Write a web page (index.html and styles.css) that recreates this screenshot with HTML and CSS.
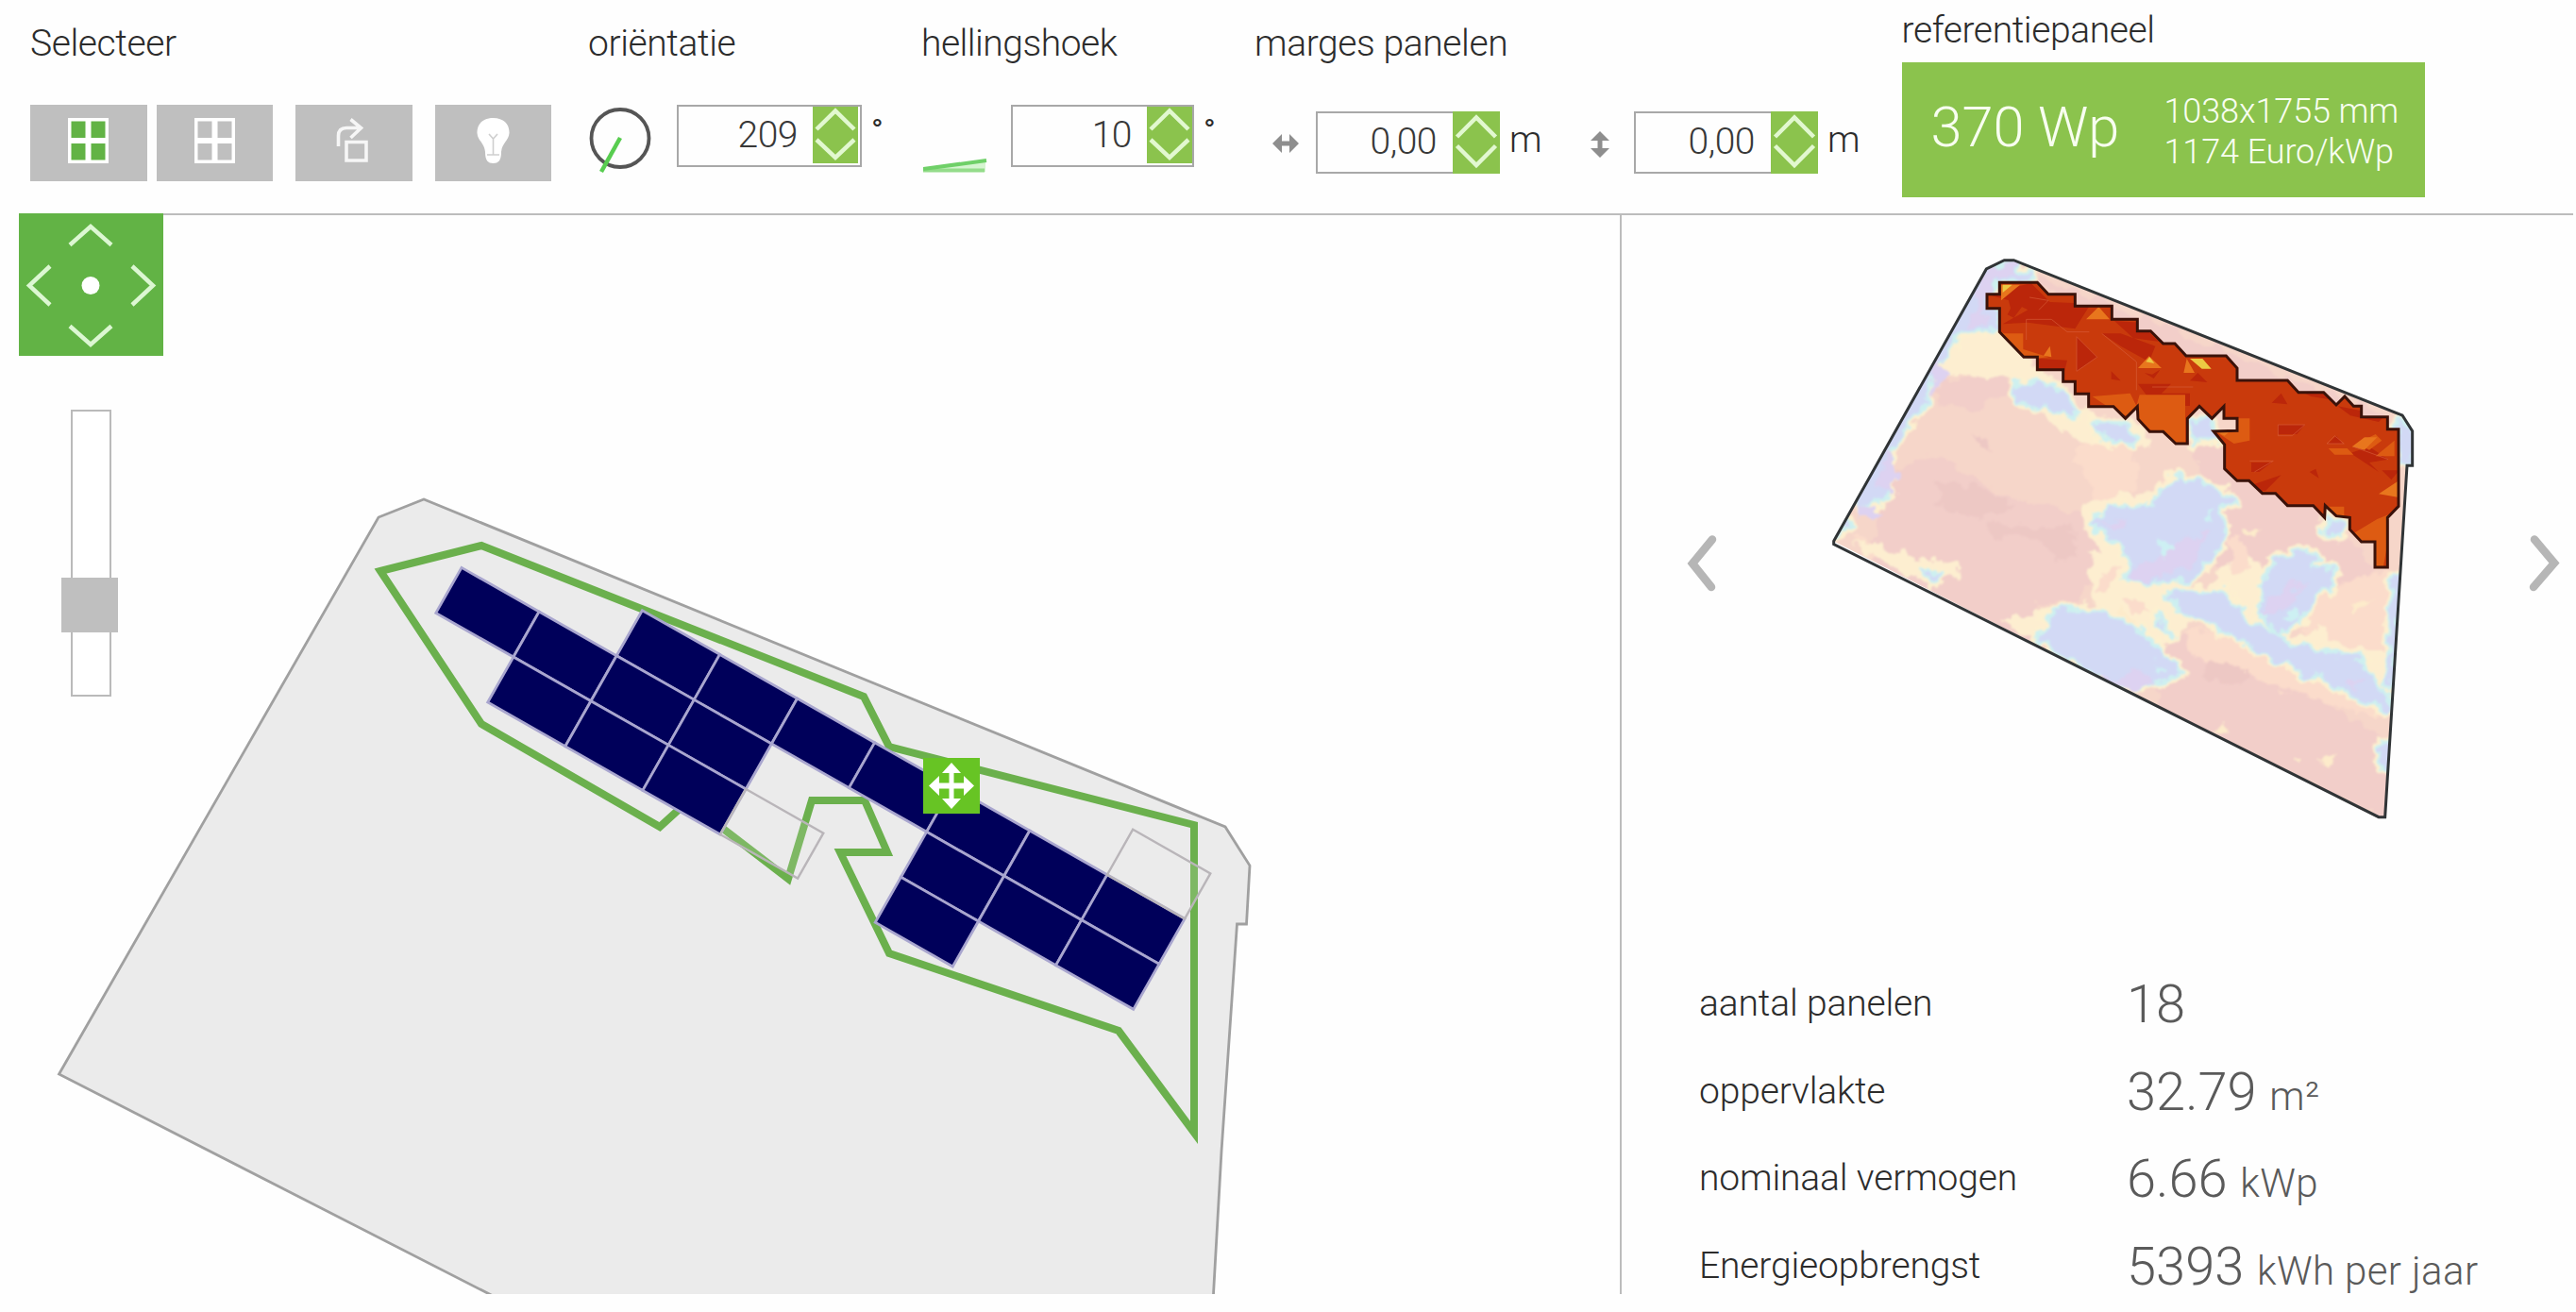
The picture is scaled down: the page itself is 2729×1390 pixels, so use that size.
FILE: index.html
```html
<!DOCTYPE html>
<html lang="nl">
<head>
<meta charset="utf-8">
<title>Zonnepanelen</title>
<link rel="stylesheet" href="styles.css">
</head>
<body>
<header class="toolbar">
  <section class="group">
    <h2 class="label">Selecteer</h2>
    <div class="buttons">
      <button class="tool"><svg width="43" height="48" viewBox="0 0 43 48"><path fill="#fff" d="M0 0h43v48H0z"/><path fill="#62b345" d="M3.500 3.500h15v17.500h-15zM24.500 3.500h15v17.500h-15zM3.500 27h15v17.500h-15zM24.500 27h15v17.500h-15z"/></svg></button>
      <button class="tool tool-gap"><svg width="43" height="48" viewBox="0 0 43 48"><path fill="#fff" d="M0 0h43v48H0z"/><path fill="#bfbfbf" d="M3.500 3.500h15v17.500h-15zM24.500 3.500h15v17.500h-15zM3.500 27h15v17.500h-15zM24.500 27h15v17.500h-15z"/></svg></button>
      <button class="tool tool-gap"><svg width="43" height="48" viewBox="0 0 43 48" fill="none" stroke="#f6f6f6" stroke-width="3.600"><path d="M5.500 30V19q0-8.500 8.500-8.500h15M18.500 1.500l11 9-11 10.500M14 25.500h21V45H14z"/></svg></button>
      <button class="tool"><svg width="43" height="48" viewBox="0 0 43 48"><path fill="#fff" d="M21.500 0C10 0 4 7 4.500 16c.5 8 7.500 10 8.500 20 0 9 3 12 8.500 12s8.500-3 8.500-12c1-10 8-12 8.500-20 .5-9-5.500-16-17-16z"/><path fill="none" stroke="#cfcfcf" stroke-width="1.600" d="M17 17l4.500 5 4.500-5M21.500 22v17M15 39h13"/></svg></button>
    </div>
  </section>
  <section class="group">
    <h2 class="label">oriëntatie</h2>
    <div class="controls">
      <svg class="dial" width="70" height="76" viewBox="0 0 70 76"><circle cx="34" cy="35.500" r="30.500" fill="none" stroke="#555" stroke-width="3.800"/><path d="M34 35L14 71" stroke="#58cd50" stroke-width="4.500"/></svg>
      <div class="spinner spin-ori"><span class="value">209</span><span class="steps"><svg width="48" height="60" viewBox="0 0 48 60"><path d="M4 24L24 4.500 44 24M4 35l20 19L44 35"/></svg></span></div>
      <span class="degree">°</span>
    </div>
  </section>
  <section class="group">
    <h2 class="label label-slope">hellingshoek</h2>
    <div class="controls">
      <svg class="slope" width="70" height="76" viewBox="0 0 70 76"><path d="M0 69L66 58V71H0z" fill="#d5f5d0"/><path d="M0 69.500h65" stroke="#94dc8a" stroke-width="4"/><path d="M0 68L67 59" stroke="#6fd068" stroke-width="4"/></svg>
      <div class="spinner spin-hel"><span class="value">10</span><span class="steps"><svg width="48" height="60" viewBox="0 0 48 60"><path d="M4 24L24 4.500 44 24M4 35l20 19L44 35"/></svg></span></div>
      <span class="degree">°</span>
    </div>
  </section>
  <section class="group">
    <h2 class="label">marges panelen</h2>
    <div class="controls margins">
      <svg class="arrow-h" width="28" height="20" viewBox="0 0 28 20"><path fill="#8e8e8e" d="M0 10L10 0v7.500h8V0l10 10-10 10v-7.500h-8V20z"/></svg>
      <div class="spinner full"><span class="value">0,00</span><span class="steps"><svg width="50" height="66" viewBox="0 0 50 66"><path d="M4.500 27L25 6.500 45.500 27M4.500 36.500L25 57 45.500 36.500"/></svg></span></div>
      <span class="unit">m</span>
      <svg class="arrow-v" width="20" height="28" viewBox="0 0 20 28"><path fill="#8e8e8e" d="M10 0L0 10h7.500v8H0l10 10 10-10h-7.500v-8H20z"/></svg>
      <div class="spinner full"><span class="value">0,00</span><span class="steps"><svg width="50" height="66" viewBox="0 0 50 66"><path d="M4.500 27L25 6.500 45.500 27M4.500 36.500L25 57 45.500 36.500"/></svg></span></div>
      <span class="unit">m</span>
    </div>
  </section>
  <section class="group reference">
    <h2 class="label">referentiepaneel</h2>
    <div class="card">
      <span class="power">370 Wp</span>
      <span class="specs">1038x1755 mm<br>1174 Euro/kWp</span>
    </div>
  </section>
</header>
<main class="workspace">
  <section class="canvas">
    <svg class="roof" width="1716" height="1143" viewBox="0 228 1716 1143">
      <defs><path id="p" d="M0 0l82.100 46.660-27.200 48-82.100-46.660z"/></defs>
      <path d="M62.500 1138L401 548l48-19 849 347 26 41-3.500 62h-10L1294 1220l-9 160H536z" fill="#ebebeb" stroke="#a0a0a0" stroke-width="2.800"/>
      <path d="M403 605l107-27 405 160 27 53 323 83v326l-80-108-243-82-52-107h50l-24-55h-56l-25 83-69-53-33-33-34 31-189-109z" fill="none" stroke="#6bb04d" stroke-width="8" stroke-miterlimit="10"/>
      <g id="panels" fill="#00005a" stroke="#a9a6cf" stroke-width="2.800"></g>
      <g fill="#ebebeb" fill-opacity=".15" stroke="#b9b5b9" stroke-width="2.400"><use href="#p" x="790.200" y="836"/><use href="#p" x="1200.200" y="878.700"/></g>
      <path d="M978 803h60v59h-60z" fill="#67c424"/>
      <path d="M1008 808l10 11h-7.500v10.500H1021V822l11 10.500-11 10.500v-7.500h-10.500V846h7.500l-10 11-10-11h7.500v-10.500H995v7.500l-11-10.500 11-10.500v7.500h10.500V819H998z" fill="#fff"/>
    </svg>
    <div class="tools">
      <svg class="pan" width="153" height="151" viewBox="0 0 153 151"><path fill="#62b345" d="M0 0h153v151H0z"/><g fill="none" stroke="#dcf7d2" stroke-width="4.500"><path d="M54 33.500L76 14l22 19.500M54 119.500L76 139l22-19.500M33 56L11 76.500 33 97M120 56l22 20.500L120 97"/></g><circle cx="76" cy="76.500" r="9.500" fill="#fff"/></svg>
      <div class="zoom"><div class="handle"></div></div>
    </div>
  </section>
  <aside class="side">
    <div class="carousel">
      <svg width="36" height="66" viewBox="0 0 36 66"><path class="chev" d="M29 7.500L8 33l20 25"/></svg>
      <svg class="heat" width="640" height="606" viewBox="0 0 1920 1818">
        <defs>
          <clipPath id="roofclip"><path d="M68 940L553 75l57-28h30L1875 540l32 50v110h-17L1820 1822h-20z"/></clipPath>
          <clipPath id="redclip"><path id="redshape" d="M555 200v-45h40v-37h120l35 37h85v38h117v42h81v37h42l40 40h37l36 39h127l35 39v39h160l35 38h80l40 40 27-27 28 31h25v34h83v39h35v245l-35 36v158h-40v-81h-43l-37-39v-38l-43-5-35-33-2 38-36-38h-82l-38-39h-42l-42-40h-38l-40-38v-77l-35-42 75-2v-39h-42v-39l-38 39-40-39-38 39v80h-37l-40-38h-43l-37-40-2-40-38 38-38-38h-79v-40h-43v-39h-38v-38h-82v-40h-43l-77-80v-75z"/></clipPath>
          <filter id="ragged" x="0" y="0" width="1" height="1"><feTurbulence type="fractalNoise" baseFrequency=".022" numOctaves="3" seed="4"/><feDisplacementMap in="SourceGraphic" scale="62" xChannelSelector="R" yChannelSelector="G"/><feGaussianBlur stdDeviation="3.500"/></filter>
          <path id="cool" d="M450 60l60-20 55 50-80 12-35 33 5 35 25 10-5 45-100 15-35 60-15 50-25 30v50l-45 30-20 50-35 60 5 60-25 60-50 20-20-50-80 60 70 40-60 30-80 30zM520 385l70-10 50 25 50 50-25 15-55-25-70-15zM730 485l70 5 40 30-10 15-70-5zM940 625l105 35 50 40-45 10 20 70-30 70-55 60-170 0 15-60-50-50-50-40 40-45 110-5zM1270 825l40 25-10 30 60 10-20 35-50 65-80 70-45-60 5-70 30-70zM920 950h155l55 70 90 60 210 55 25 50 35 45v40l-50-30-70-40-80-30-140-70-110-70-70-30zM610 1010l70-25 80 25 100 50 40 50 60 50-110 40-70-10-185-115zM1340 740l40 20-10 30-40-10zM290 890h50l-30 25zM985 480h45l20 50h-60zM895 1000l30 60-20-20zM1520 470l40 40v90h-25zM1510 900h20l-20 300h-15zM1475 1360h25v60h-25z"/>
        </defs>
        <g clip-path="url(#roofclip)">
          <path fill="#f6d6c9" d="M0 0h1920v1818H0z"/>
          <g filter="url(#ragged)">
            <path fill="#f6d6c9" d="M0 0h1920v1818H0z"/>
            <g transform="scale(1.2245 1.1671)">
              <path fill="#f2cec9" d="M560 70L1568 500 1420 500 1000 330 600 120zM240 600l80-30 180 120 240 50 10 120-60 100-100 20-10 100-200-70-230-150 20-150zM980 530l100 20 280 200 100 150-100 60-240-40-80-60 20-120zM940 1060l120 30 440 260v220l-580-290-50-110zM330 380l160-40 10 60-90 50-80-20z"/>
              <path fill="#fbdccb" d="M1320 940l180-60-10 240-120-10-100-60zM960 1050l100 0 250 130 180 110-140-30-190-80-170-60zM100 780l100 60-60 20zM750 500l90 60 0 100-90 60-80-160z"/>
              <path fill="#fdeed0" d="M380 235h110l100 105-80 30-120-20-60 10zM500 340l90-10 60 50 60 70 80 50 40-30 40 30 10 40-70 10-110-20-90-50-60-90zM720 690l160-20 40-60 40 10-40 80-80 180-70-20-60-80-10-60zM720 840l80-20 200 120 50 20-50 60-100 60-60 30-150-80-110 0 10-40 140-10zM1030 920l80-90 50 40 50 60-60 100-90-20zM1230 1080l90-40 60 50 110 20v100l-120-50zM100 810l90 10 60 30 120 10 10 40-90 20zM490 1010l100 0 10 70-80-40z"/>
              <use href="#cool" fill="#fdf0cf" stroke="#fdf0cf" stroke-width="36" stroke-linejoin="round"/>
              <use href="#cool" fill="#cdf0f0" stroke="#cdf0f0" stroke-width="18" stroke-linejoin="round"/>
              <use href="#cool" fill="#d2d9f5"/>
              <path fill="#fbdccb" d="M800 560l40 10-10 60-30 20zM800 960l60 10 20 30-50-10zM740 900l60-20-20 40-40 30zM1080 800l40 0 10 80-40 20z"/>
              <path fill="#ddd2f1" d="M450 60l60-20 30 40-60 15-50 80 40 40-70 10zM320 300l40 50-50 60zM200 560l30 60-30 50-30-20zM120 700l60 30-50 20zM830 880l60-20 60-60 80-20-40 80-70 40-100 10zM740 755l80-10-30 30zM1180 960l100-60-50 100-60 10zM1390 1180l40 10-30 20zM740 1180l120-20 30 30-50 20z"/>
              <path fill="#cdf0f3" d="M910 790l30 45-20 15-20-10zM1020 720l20 0-20 30zM890 1130l20 30-10 10zM1210 1030l40-40 10 20z"/>
              <path fill="#edc8c4" d="M410 515l30 10 35 45-20-5zM330 650l110 10 80 50-90 30-110-40zM450 760l230 10-40 30-170 0zM1040 1130l100 30-20 40-110-20zM600 800l80-20 10 60-60 20z"/>
              <path fill="#fdebcb" d="M1310 1390l55 0-25 30zM1250 1390l20 10-10 15zM1070 1290l10 35-40 0zM1400 980l60-20-60 50zM1110 770l60 0-30 30zM790 990l50 20-20 20z"/>
            </g>
          </g>
        </g>
        <g clip-path="url(#redclip)">
          <path fill="#c93a0c" d="M500 100h1400v950H500z"/>
          <path fill="#bb260a" d="M555 155l140-35 60 60 130 5-50 80-150-20-80 5 80-45-60-30zM840 290l65 65-65 45zM920 280h60l110 40-20 50-90-50zM1035 440h105l-60 60zM1080 470h120v40h-120zM720 360l90 5-10 40h-80zM960 240l80 5 60 60-80-10zM1080 410l25-15-20 28-30-18zM1460 500l30-30 20 35zM1480 570h85l-25 30h-60zM1395 690h65l-40 30h-25zM1370 770l120-40-50 50-80 0zM1545 460h80l20 30-60-10zM1640 630l25-25 20 25zM1710 660l60-20 60 40-60 10 30 30zM1810 715h55l-25 30zM1200 430l25-25 30 30zM1580 720l20-10 10 30zM620 160l50 30-30 40-20-10 10-20zM950 400l30 30-30-5zM1670 511l150 30-20 20-90-20z"/>
          <path fill="#dd5b12" d="M590 270l20 10h60v50l80 25-90 10zM890 480l120-10 20 40 10-35h145v155h-50l-110-80-60-20zM1640 645l60 0 20 20-60 0zM1350 550h40v70l-50 10-60-40zM1630 830h60v60l-30-20zM1730 630l60-30 20 20-40 30zM1850 620v50l-60 0zM1745 900l50-30 50-20-30 170h-60l-60-90z"/>
          <path fill="#e8761d" d="M600 125l60 0-60 50zM870 235l40-40 35 40zM1035 390l35-38 40 38zM735 350l20-30 5 35zM1190 360l25 45h-35zM1715 640l40-30 40 0-40 40zM1800 790l60-40v50zM1280 590l60-10-30 25z"/>
          <path fill="#ecc943" d="M1200 360h40l28 32h-30zM605 125l30 0-30 25zM1060 370l12-15 15 20z"/>
          <g fill="none" stroke="#d9603b" stroke-width="2.500" opacity=".75"><path d="M680 300v-65h80l50 40h70M840 400v-110l65 65zM920 280l110 90v90M690 165l60 10-30 30M1080 450h130M1480 570h85l-40 35h-45zM1390 685h75l-60 35M1635 630l25-25 30 25zM1720 640l110 40"/></g>
        </g>
        <use href="#redshape" fill="none" stroke="#3a120a" stroke-width="9"/>
        <path fill="none" stroke="#303436" stroke-width="9" d="M68 940L553 75l57-28h30L1875 540l32 50v110h-17L1820 1817h-20L68 950z"/>
      </svg>
      <svg width="36" height="66" viewBox="0 0 36 66"><path class="chev" d="M9 7.500L30 32.500l-22 25.500"/></svg>
    </div>
    <dl class="stats">
      <dt>aantal panelen</dt><dd>18</dd>
      <dt>oppervlakte</dt><dd>32.79 <small>m²</small></dd>
      <dt>nominaal vermogen</dt><dd>6.66 <small>kWp</small></dd>
      <dt>Energieopbrengst</dt><dd>5393 <small>kWh per jaar</small></dd>
    </dl>
  </aside>
</main>
<script src="panels.js"></script>
</body>
</html>
```
FILE: panels.js
```js
// Placed panels as [column, row] on the tilted grid.
const placed = [[0,0],[1,0],[2,0],[3,0],[4,0],[5,0],[6,0],[-2,1],[-1,1],[0,1],[1,1],[4,1],[5,1],[6,1],[-1,2],[0,2],[1,2],[4,2]];
const layer = document.getElementById('panels');
for (const [i, j] of placed) {
  const u = document.createElementNS('http://www.w3.org/2000/svg', 'use');
  u.setAttribute('href', '#p');
  u.setAttribute('x', 680.4 + 82.1 * i - 27.2 * j);
  u.setAttribute('y', 646.7 + 46.66 * i + 48 * j);
  layer.appendChild(u);
}
```
FILE: styles.css
```css
* { box-sizing: border-box; }
body { margin: 0; width: 2729px; height: 1390px; overflow: hidden; background: #fefefe; font-family: Roboto, "Liberation Sans", sans-serif; font-weight: 300; color: #2c2c2c; }
svg { display: block; flex: none; }
.toolbar { display: grid; grid-template-columns: 591px 355px 351px 685.5px 1fr; height: 228px; margin: 0 3px 0 20px; padding: 22px 0 0 12px; border-bottom: 2px solid #bcbcbc; }
.label { margin: 0; padding-top: 1px; height: 46px; font-size: 39px; line-height: 46px; font-weight: 300; letter-spacing: -0.4px; white-space: nowrap; }
.label-slope { margin-left: -2px; letter-spacing: -0.5px; }
.buttons { display: flex; gap: 10px; margin-top: 43px; }
.tool { display: flex; align-items: center; justify-content: center; width: 123.500px; height: 81px; padding: 0 0 5px; border: 0; background: #bfbfbf; }
.tool-gap { margin-right: 14px; }
.controls { display: flex; align-items: flex-start; margin-top: 43px; white-space: nowrap; }
.spinner { display: flex; justify-content: flex-end; height: 66px; border: 2px solid #a8a8a8; }
.value { font-size: 39px; line-height: 46px; padding: 7px 16px 0 0; color: #383838; letter-spacing: -0.5px; }
.steps { width: 48px; height: 60px; background: #8bc34d; }
.steps path { fill: none; stroke: #e2f8d0; stroke-width: 4.500; }
.spin-ori { width: 196px; margin-left: 24px; padding-right: 2px; }
.spin-hel { width: 194px; margin-left: 23px; }
.degree { margin-left: 10px; font-size: 34px; line-height: 40px; padding-top: 7px; font-weight: 400; }
.margins { margin-top: 50px; padding-left: 19px; }
.full { width: 195px; margin-right: 10px; }
.full .steps { width: 50px; height: 66px; margin: -2px -2px 0 0; }
.full .value { padding-right: 17px; }
.arrow-h { margin: 24px 18px 0 0; }
.arrow-v { margin: 21px 26px 0 53px; }
.unit { width: 33px; font-size: 39px; line-height: 46px; padding-top: 7px; }
.reference { margin-top: -14px; }
.card { display: flex; align-items: center; width: 554px; height: 143px; margin-top: 12px; padding-left: 31px; background: #8bc34d; color: #f8fef0; }
.power { width: 247px; font-size: 59.500px; margin-top: -5px; }
.specs { margin-top: 4px; font-size: 36px; line-height: 43px; letter-spacing: -0.1px; white-space: nowrap; }
.workspace { display: grid; grid-template-columns: 1716px 1fr; grid-template-rows: 1143px; }
.canvas { display: grid; }
.roof, .tools { grid-area: 1 / 1; }
.tools { width: 153px; margin: -2px 0 0 20px; }
.zoom { width: 43px; height: 304px; margin: 57px 0 0 55px; border: 2px solid #bababa; background: #fff; padding-top: 176px; }
.handle { width: 60px; height: 58px; margin-left: -12px; background: #bfbfbf; }
.side { height: 1143px; border-left: 2px solid #bcbcbc; }
.carousel { display: flex; align-items: flex-start; padding: 32px 0 0 67px; height: 780px; }
.carousel > svg:not(.heat) { margin-top: 304px; }
.carousel .heat { margin: 0 116px 0 99px; overflow: visible; }
.chev { fill: none; stroke: #b6b6b6; stroke-width: 8.500; stroke-linecap: round; }
.stats { display: grid; grid-template-columns: 453px 1fr; grid-auto-rows: 92.600px; margin: 0; padding: 23px 0 0 82px; white-space: nowrap; }
.stats dt { padding-top: 9px; font-size: 39px; line-height: 46px; letter-spacing: -0.15px; }
.stats dd { margin: 0; font-size: 56px; line-height: 66px; color: #5a5a5a; }
.stats small { font-size: 42px; letter-spacing: 0.4px; }
```
